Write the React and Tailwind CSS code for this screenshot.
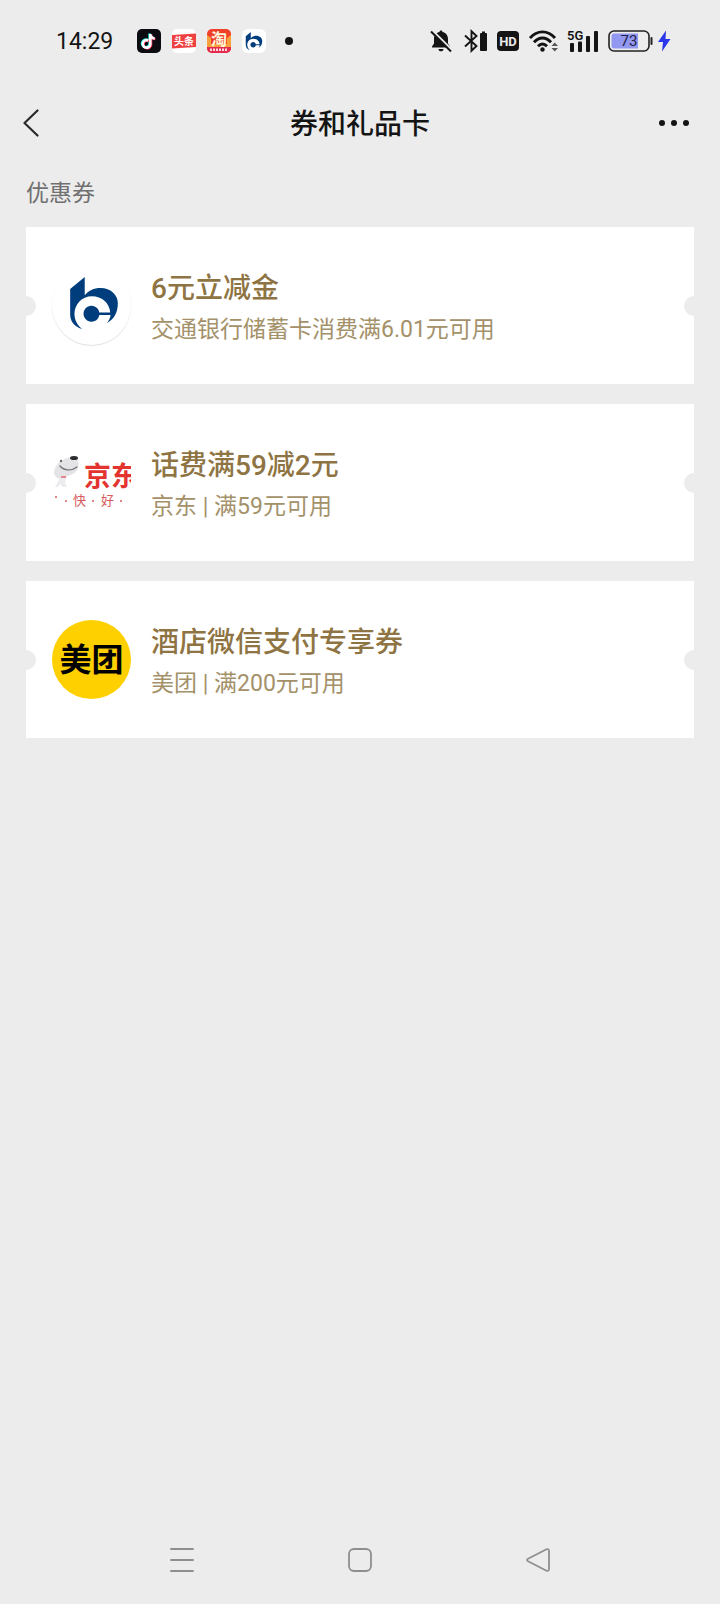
import React from 'react';

const BankMark = ({ className }) => (
  <svg viewBox="151 173 144 157" className={className} aria-hidden="true">
    <path fill="#003d7c" d="M151 209 L195 173 V228 C206 214 222 206 243 206 C273 206 295 226 295 252 C295 280 283 301 262 312 C269 304 272 297 273 288 H239 A24 24 0 1 1 239 280 H272 C270 251 246 231 217 231 C186 231 164 256 164 284 C164 303 173 319 187 330 C162 322 151 305 151 286 Z" />
  </svg>
);

const BankLogo = () => (
  <div className="flex size-[79px] shrink-0 items-center justify-center rounded-full bg-white pb-[6px] pl-1 shadow-[0_1px_1px_rgba(0,0,0,0.12)]">
    <BankMark className="h-[52px] w-12" />
  </div>
);

const JdLogo = () => (
  <svg viewBox="0 0 79 79" className="size-[79px] shrink-0" role="img" aria-label="京东">
    <path fill="#e4e4e7" d="M2 29 C3 24 6 19 11 17 C15 14 24 13 26 17 C28 23 25 31 18 32 C15 33 13 35 12 36 C7 37 2 34 2 29 Z" />
    <path fill="#ececee" d="M8 34 L14 34 L13 40 L15 44 H11 L8 41 L6 44 H3 L6 39 Z" />
    <path fill="none" stroke="#74787d" strokeWidth="1.4" strokeLinecap="round" d="M8 23 C12 28 20 28 25 24" />
    <ellipse cx="22" cy="15" rx="4" ry="2" fill="#2b2b2e" />
    <circle cx="9" cy="18" r="1.2" fill="#66696d" />
    <path stroke="#e06a70" strokeWidth="1.5" d="M9 34 H14" />
    <text x="32" y="43" fontSize="27" fontWeight="700" fill="#e3342f">京东</text>
    <g fill="#d95a5c">
      <text x="21" y="62" fontSize="13">快</text>
      <text x="49" y="62" fontSize="13">好</text>
      <circle cx="4" cy="54" r="1" />
      <circle cx="14" cy="58" r="1" />
      <circle cx="41" cy="58" r="1" />
      <circle cx="69" cy="58" r="1" />
    </g>
  </svg>
);

const MeituanLogo = () => (
  <div className="flex size-[79px] shrink-0 items-center justify-center rounded-full bg-[#ffd000]">
    <span className="text-[32px] leading-8 font-bold text-black">美团</span>
  </div>
);

const coupons = [
  { title: '6元立减金', desc: '交通银行储蓄卡消费满6.01元可用', Logo: BankLogo },
  { title: '话费满59减2元', desc: '京东 | 满59元可用', Logo: JdLogo },
  { title: '酒店微信支付专享券', desc: '美团 | 满200元可用', Logo: MeituanLogo },
];

const CouponCard = ({ title, desc, Logo }) => (
  <li className="relative flex h-[157px] items-center gap-5 overflow-hidden bg-white px-[26px]">
    <span className="absolute top-1/2 -left-[10px] size-5 -translate-y-1/2 rounded-full bg-[#ececec]"></span>
    <span className="absolute top-1/2 -right-[10px] size-5 -translate-y-1/2 rounded-full bg-[#ececec]"></span>
    <Logo />
    <div className="min-w-0 pt-[6px]">
      <h2 className="text-[28px] leading-[42px] font-medium text-[#8f7443]">{title}</h2>
      <p className="text-[23px] leading-10 text-[#a4916a]">{desc}</p>
    </div>
  </li>
);

const AppIcons = () => (
  <div className="flex items-center gap-[11px]">
    <svg viewBox="0 0 24 24" className="size-6" aria-hidden="true">
      <rect width="24" height="24" rx="5" fill="#0b0b12" />
      <g fill="none" strokeWidth="2.6">
        <path stroke="#25f4ee" d="M10.5 11 A3.8 3.8 0 1 0 12.6 15 V4.5 C12.8 7 14.5 8.8 17 9" />
        <path stroke="#fe2c55" d="M11.9 12 A3.8 3.8 0 1 0 14 16 V5.5 C14.2 8 15.9 9.8 18.4 10" />
        <path stroke="#fff" d="M11.2 11.5 A3.8 3.8 0 1 0 13.3 15.5 V5 C13.5 7.5 15.2 9.3 17.7 9.5" />
      </g>
    </svg>
    <svg viewBox="0 0 24 24" className="size-6" aria-hidden="true">
      <rect width="24" height="24" rx="5" fill="#fff" />
      <path fill="#f04142" d="M0 6 L24 4.5 V18 L0 19.5 Z" />
      <text x="12" y="16" fontSize="10" fontWeight="700" textAnchor="middle" fill="#fff">头条</text>
    </svg>
    <svg viewBox="0 0 24 24" className="size-6" aria-hidden="true">
      <rect width="24" height="24" rx="5" fill="#f0402a" />
      <path fill="#f7a13c" d="M0 6 L4 9 V15 H20 V9 L24 6 V18 H0 Z" />
      <text x="12" y="16" fontSize="16" fontWeight="700" textAnchor="middle" fill="#fff6dc">淘</text>
      <path fill="#e32b4f" d="M0 18 H24 V19 A5 5 0 0 1 19 24 H5 A5 5 0 0 1 0 19 Z" />
      <path stroke="#ffd9de" strokeWidth="2.5" strokeDasharray="2 1" d="M3 20.7 H21" />
    </svg>
    <span className="flex size-6 items-center justify-center rounded-md bg-white">
      <BankMark className="size-[18px]" />
    </span>
  </div>
);

const SystemIcons = () => (
  <div className="flex items-center text-[#141414]">
    <svg viewBox="0 0 22 24" className="mr-3 h-6 w-[22px]" fill="currentColor" aria-label="静音">
      <path d="M11 1.5 C11.9 1.5 12.5 2.1 12.5 3 C16 3.7 18 6.5 18 10 V14.5 L20 17.5 V18.5 H2 V17.5 L4 14.5 V10 C4 6.5 6 3.7 9.5 3 C9.5 2.1 10.1 1.5 11 1.5 Z" />
      <path d="M8.5 20 H13.5 C13.5 21.5 12.4 22.3 11 22.3 C9.6 22.3 8.5 21.5 8.5 20 Z" />
      <path stroke="#ececec" strokeWidth="2" d="M2.5 1.5 L22 21" />
      <path stroke="currentColor" strokeWidth="2" d="M1 2.5 L21 22.5" />
    </svg>
    <svg viewBox="0 0 24 24" className="mr-[9px] size-6" aria-label="蓝牙">
      <path fill="none" stroke="currentColor" strokeWidth="1.9" d="M1 6.5 L12.5 17 L7.5 21.8 V2.2 L12.5 7 L1 17.5" />
      <path fill="currentColor" d="M17 4 H18 V2.5 H21 V4 H22 Q23 4 23 5 V21 Q23 22 22 22 H17 Q16 22 16 21 V5 Q16 4 17 4 Z" />
    </svg>
    <svg viewBox="0 0 22 20" className="mr-[10px] h-5 w-[22px]" aria-label="HD">
      <rect width="22" height="20" rx="4" fill="currentColor" />
      <text x="11" y="15" fontSize="13" fontWeight="700" textAnchor="middle" fill="#ececec">HD</text>
    </svg>
    <svg viewBox="0 0 30 24" className="mr-2 h-6 w-[30px]" aria-label="WLAN">
      <g fill="none" stroke="currentColor" strokeWidth="2.9">
        <path d="M1 9 C8 0.8 19 0.8 26 9" />
        <path d="M5 13.3 C10 7.6 17 7.6 22 13.3" />
        <path d="M9 17.3 C11.8 14.2 15.2 14.2 18 17.3" />
      </g>
      <circle cx="13.5" cy="20.5" r="2.2" fill="currentColor" />
      <path fill="#555" d="M22.5 17 L25.7 13.5 L29 17 Z M22.5 19 L25.7 22.5 L29 19 Z" />
    </svg>
    <svg viewBox="0 0 32 24" className="mr-[9px] h-6 w-8" fill="currentColor" aria-label="5G">
      <text x="0" y="10.5" fontSize="13" fontWeight="600">5G</text>
      <rect x="3" y="14" width="4" height="9" rx="1" />
      <rect x="11" y="12.5" width="4" height="10.5" rx="1" />
      <rect x="19" y="7" width="4" height="16" rx="1" />
      <rect x="27" y="2" width="4" height="21" rx="1" />
    </svg>
    <svg viewBox="0 0 45 22" className="mr-1 h-[22px] w-[45px]" aria-label="电量 73%">
      <rect x="1" y="1" width="40" height="20" rx="5" fill="none" stroke="#222" strokeWidth="1.6" />
      <path fill="#9297f0" d="M6 3.5 H30 V18.5 H6 Q3.5 18.5 3.5 16 V6 Q3.5 3.5 6 3.5 Z" />
      <path fill="none" stroke="#222" strokeWidth="2" strokeLinecap="round" d="M43.5 8 V14" />
      <text x="21" y="16" fontSize="15" textAnchor="middle" fill="#23244a">73</text>
    </svg>
    <svg viewBox="0 0 14 22" className="h-[22px] w-[14px]" aria-label="充电中">
      <path fill="#2b35ea" d="M9 0.5 L1 12 H6 L5 21.5 L13.5 9 H8.5 Z" />
    </svg>
  </div>
);

export default function App() {
  return (
    <div
      lang="zh-CN"
      className="flex min-h-screen flex-col bg-[#ececec] font-[Roboto,'Noto_Sans_CJK_SC',sans-serif]"
    >
      <div className="flex h-[82px] items-center pr-[49px] pl-14">
        <span className="w-[81px] pt-[2px] text-[23px] leading-8 text-[#141414]">14:29</span>
        <AppIcons />
        <span className="ml-[19px] size-2 rounded-full bg-[#141414]"></span>
        <div className="ml-auto">
          <SystemIcons />
        </div>
      </div>

      <header className="flex h-[82px] items-center justify-between px-5">
        <button type="button" aria-label="返回" className="flex w-14 items-center pl-[3px]">
          <svg viewBox="0 0 16 28" className="h-7 w-4" fill="none" stroke="#2a2a2a" strokeWidth="2.2" strokeLinecap="round" strokeLinejoin="round">
            <path d="M14.5 1.5 L1.5 14 L14.5 26.5" />
          </svg>
        </button>
        <h1 className="pt-1 text-[28px] leading-10 font-medium text-[#141414]">券和礼品卡</h1>
        <button type="button" aria-label="更多" className="flex w-14 items-center justify-end gap-[6px] pr-[11px]">
          <span className="size-[6px] rounded-full bg-[#141414]"></span>
          <span className="size-[6px] rounded-full bg-[#141414]"></span>
          <span className="size-[6px] rounded-full bg-[#141414]"></span>
        </button>
      </header>

      <main className="flex-1 px-[26px]">
        <p className="pt-[10px] pb-[13px] text-[23px] leading-10 text-[#707070]">优惠券</p>
        <ul className="flex flex-col gap-5">
          {coupons.map((coupon) => (
            <CouponCard key={coupon.title} {...coupon} />
          ))}
        </ul>
      </main>

      <nav className="grid h-[88px] grid-cols-3 items-center justify-items-center px-[93px]">
        <button type="button" aria-label="最近任务">
          <svg viewBox="0 0 24 24" className="size-6" stroke="#8e8e8e" strokeWidth="1.8" strokeLinecap="round">
            <path d="M1 1 H23 M1 12 H23 M1 23 H23" />
          </svg>
        </button>
        <button type="button" aria-label="主屏幕">
          <svg viewBox="0 0 24 24" className="size-6" fill="none" stroke="#8e8e8e" strokeWidth="1.8">
            <rect x="1" y="1" width="22" height="22" rx="5" />
          </svg>
        </button>
        <button type="button" aria-label="返回上一页">
          <svg viewBox="0 0 24 24" className="size-6" fill="none" stroke="#8e8e8e" strokeWidth="1.8" strokeLinejoin="round">
            <path d="M2 10.7 L20.5 1.3 Q23 0.6 23 3 V21 Q23 23.4 20.5 22.7 L2 13.3 Q0.2 12 2 10.7 Z" />
          </svg>
        </button>
      </nav>
    </div>
  );
}
